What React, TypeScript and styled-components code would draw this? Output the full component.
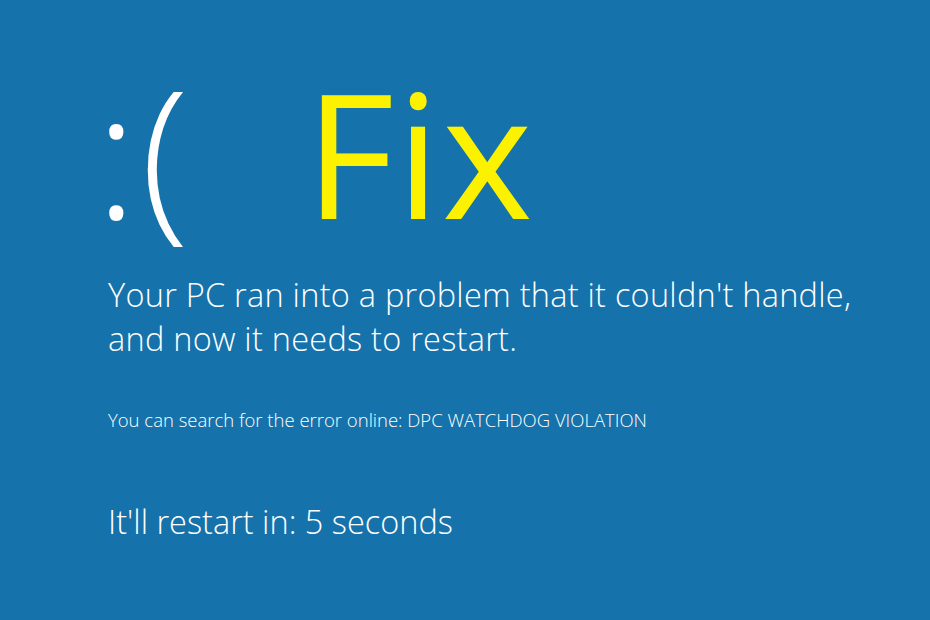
import React from "react";
import styled, { createGlobalStyle } from "styled-components";

const Global = createGlobalStyle`
  html, body { margin: 0; padding: 0; background: #1572ab; }
  body { font-family: "Open Sans", "Noto Sans", sans-serif; }
`;

const Screen = styled.div`
  width: 930px;
  height: 620px;
  background: #1572ab;
  box-sizing: border-box;
  padding: 35px 0 0 104px;
  color: #ffffff;
  overflow: hidden;
  display: flex;
  flex-direction: column;
`;

const Header = styled.div`
  display: flex;
  align-items: baseline;
  height: 230px;
  margin-left: -9px;
`;

const Sad = styled.span`
  font-size: 178px;
  font-weight: 300;
  line-height: 230px;
  color: #ffffff;
  width: 210px;
  letter-spacing: 3px;
`;

const Fix = styled.span`
  font-size: 173px;
  font-weight: 460;
  line-height: 230px;
  letter-spacing: 2px;
  color: #fcf200;
`;

const Message = styled.p`
  margin: 8px 0 0 4px;
  font-size: 32.5px;
  font-weight: 300;
  line-height: 44px;
  letter-spacing: 0.25px;
`;

const Detail = styled.p`
  margin: 48px 0 0 4px;
  font-size: 18.5px;
  font-weight: 300;
  line-height: 22px;
`;

const Restart = styled.p`
  margin: 71px 0 0 4px;
  font-size: 32.5px;
  font-weight: 300;
  line-height: 40px;
`;

export default function App() {
  return (
    <>
      <Global />
      <Screen>
        <Header>
          <Sad>:(</Sad>
          <Fix>Fix</Fix>
        </Header>
        <Message>
          Your PC ran into a problem that it couldn't handle,
          <br />
          and now it needs to restart.
        </Message>
        <Detail>You can search for the error online: DPC WATCHDOG VIOLATION</Detail>
        <Restart>It'll restart in: 5 seconds</Restart>
      </Screen>
    </>
  );
}
